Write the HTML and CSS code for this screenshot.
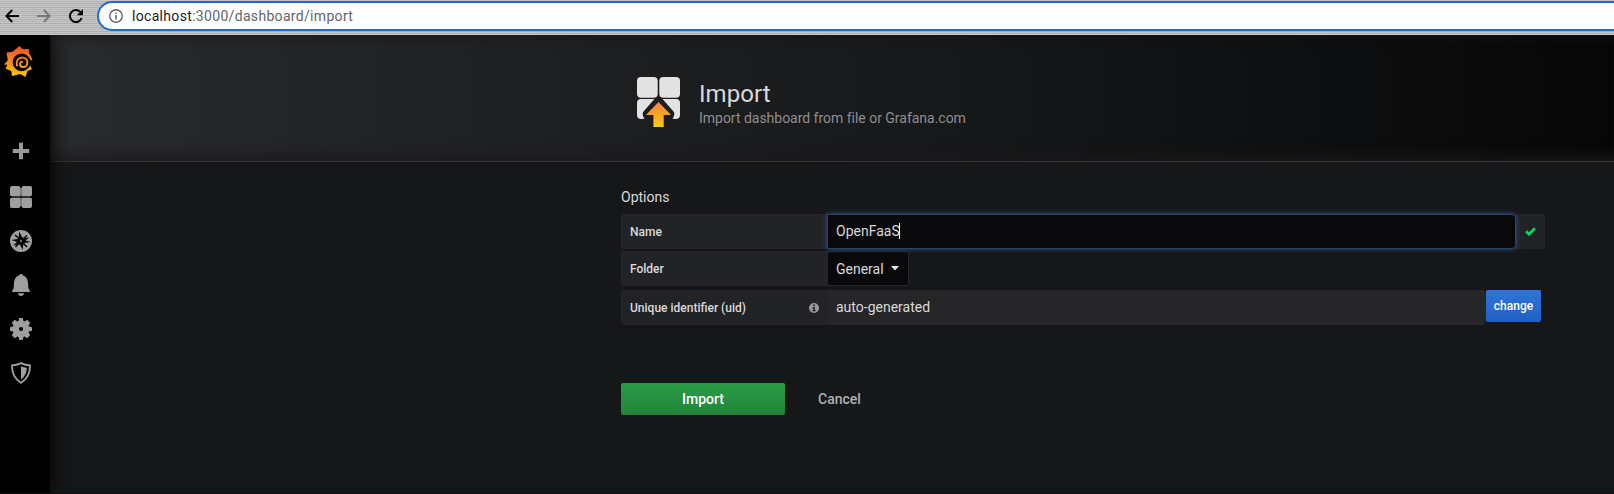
FILE: index.html
```html
<!DOCTYPE html>
<html lang="en">
<head>
<meta charset="utf-8">
<title>Import dashboard</title>
<link rel="stylesheet" href="styles.css">
</head>
<body>
<div class="toolbar">
  <div class="nav-buttons">
    <svg width="14" height="14" viewBox="0 0 14 14" fill="none" stroke="#080808" stroke-width="2"><path d="M14 7H1.5M7.2 1L1.4 7l5.8 6"/></svg>
    <svg width="14" height="14" viewBox="0 0 14 14" fill="none" stroke="#777" stroke-width="2"><path d="M0 7h12.5M6.8 1l5.8 6-5.8 6"/></svg>
    <svg width="14" height="14" viewBox="0 0 14 14"><path d="M12.6 9.2A6 6 0 1 1 11.3 2.9" fill="none" stroke="#080808" stroke-width="2"/><path d="M14 0v6.2H7.8z" fill="#080808"/></svg>
  </div>
  <div class="address">
    <svg width="14" height="14" viewBox="0 0 14 14"><circle cx="7" cy="7" r="6.2" fill="none" stroke="#5f6368" stroke-width="1.4"/><path d="M6.3 6.1h1.5v4.3H6.3zM6.3 3.4h1.5v1.5H6.3z" fill="#5f6368"/></svg>
    <div class="url"><span class="host">localhost</span>:3000/dashboard/import</div>
  </div>
</div>
<div class="app">
  <nav class="sidemenu">
    <svg class="logo" width="30" height="32" viewBox="0 0 30 32">
      <defs><linearGradient id="flame" gradientUnits="userSpaceOnUse" x1="0" y1="0" x2="0" y2="31"><stop offset="0.1" stop-color="#f05a28"/><stop offset=".5" stop-color="#f68a1f"/><stop offset="1" stop-color="#fbca0a"/></linearGradient></defs>
      <path fill="url(#flame)" d="M15.500 0l3.300 3.200 6-.2.200 4.500C27 9.500 28 12 28.300 15L27 14l-.9 5.500 1.900 3.800-4.600 1.600L21.500 31l-5.200-3-8.300 2-.8-4.900-5.500-2.400 1.600-3.900L0 18.500l3.800-4.200L2.500 6.500l6-.8z"/>
      <circle cx="17.600" cy="16.300" r="8.900" fill="#000"/>
      <path d="M23.500 10l3.800 4.700-.8 3.600-3 2.200z" fill="#000"/>
      <path d="M13 19.500C11.800 14.800 14.300 11.400 18 11.400c3.200 0 5.400 2.300 5.400 5.200 0 2.700-2 4.500-4.200 4.500-1.900 0-3.200-1.300-3.200-3 0-1.300.8-2.200 2-2.300" fill="none" stroke="url(#flame)" stroke-width="2" stroke-linecap="round"/>
    </svg>
    <svg class="item plus" width="22" height="22" viewBox="0 0 22 22"><path d="M11 4.800v12.400M4.800 11h12.400" fill="none" stroke="#999" stroke-width="4" stroke-linecap="square"/></svg>
    <svg class="item" width="22" height="22" viewBox="0 0 22 22" fill="#9f9f9f"><path fill="#666" d="M9 2h4v7h7v4h-7v7H9v-7H2V9h7z"/><rect width="10.400" height="10.400" rx="2"/><rect x="11.600" width="10.400" height="10.400" rx="2"/><rect y="11.600" width="10.400" height="10.400" rx="2"/><rect x="11.600" y="11.600" width="10.400" height="10.400" rx="2"/><path d="M0 11h22" stroke="#000" stroke-width="1.200"/></svg>
    <svg class="item" width="22" height="22" viewBox="0 0 22 22"><circle cx="11" cy="11" r="11" fill="#9f9f9f"/><path d="M9.200 1.800l3.200 5.700 1.400.8 5.400-.7-3.700 2.900 5.300 1.400-6.300 1.200-1.200 1.300-.6 5.400-2.600-4.900-1.600-.7-5.500 1.200 4-3.500L1.500 10l6-.9 1.100-1.200z" fill="#050505"/><path d="M5 5l4 3.500M17 5.500L13.500 8.500M5.500 17l3-3.500M17 17l-3.500-3.500" stroke="#050505" stroke-width="1.500"/><circle cx="11" cy="11" r="1.100" fill="#888"/></svg>
    <svg class="item" width="22" height="22" viewBox="0 0 22 22" fill="#9f9f9f"><path d="M11 0c1 0 1.500.5 1.700 1.300C16 2.300 17.800 5 18 9l.4 5.500L19.700 16v2H2.300v-2l1.300-1.500L4 9c.200-4 2-6.700 5.300-7.700C9.500.5 10 0 11 0zM8 19.200h6c-.2 1.700-1.500 2.800-3 2.800s-2.800-1.100-3-2.800z"/></svg>
    <svg class="item" width="22" height="22" viewBox="0 0 22 22"><path fill="#9f9f9f" fill-rule="evenodd" d="M9.200 0h3.600l.6 3 1.200.5 2.600-1.700 3 3-1.700 2.600.5 1.200 3 .6v3.600l-3 .6-.5 1.200 1.700 2.600-3 3-2.600-1.700-1.200.5-.6 3H9.200l-.6-3-1.200-.5-2.600 1.700-3-3 1.700-2.600-.5-1.200-3-.6V9.200l3-.6.5-1.200-1.700-2.600 3-3 2.600 1.700 1.200-.5zM11 8.900a2.100 2.100 0 1 0 0 4.200 2.100 2.100 0 0 0 0-4.200z"/></svg>
    <svg class="item" width="22" height="22" viewBox="0 0 22 22"><path d="M11 1.200c2.900 1.500 5.900 2.200 9 2.200.2 7.400-2.500 13.400-9 17.400C4.500 16.800 1.800 10.800 2 3.400c3.100 0 6.100-.7 9-2.200z" fill="none" stroke="#9f9f9f" stroke-width="1.900"/><path d="M11 4.200c1.900.8 3.700 1.300 5.800 1.500 0 4.800-1.900 8.900-5.800 11.900z" fill="#9f9f9f"/></svg>
  </nav>
  <main class="main">
    <header class="page-header">
      <svg class="header-icon" width="43" height="50" viewBox="0 0 43 50">
        <defs><linearGradient id="arrow" x1="0" y1="0" x2="0" y2="1"><stop offset="0" stop-color="#f58442"/><stop offset=".6" stop-color="#f9ad1c"/><stop offset="1" stop-color="#fccb0c"/></linearGradient></defs>
        <g fill="#e2e2e2"><rect width="20.700" height="20.800" rx="4"/><rect x="22.300" width="20.700" height="20.800" rx="4"/><path d="M4 22h13.500L6.500 34.500C5 36.500 5.500 39 7.500 41.700L4.500 42Q0 42 0 38V26Q0 22 4 22zM25.500 22H39q4 0 4 4v12q0 4-4.500 4l-3-.3c2-2.700 2.500-5.200 1-7.200z"/></g>
        <path d="M21.500 25L34 38h-7.300v12H16.400V38H9z" fill="url(#arrow)"/>
      </svg>
      <div><h1>Import</h1><div class="subtitle">Import dashboard from file or Grafana.com</div></div>
    </header>
    <section class="content">
      <h2>Options</h2>
      <div class="row">
        <div class="label">Name</div>
        <div class="input focused">OpenFaaS<span class="caret"></span></div>
        <div class="valid"><svg width="11" height="9" viewBox="0 0 11 9"><path d="M1 4.300l3 3 6-6" fill="none" stroke="#10d65a" stroke-width="2.700"/></svg></div>
      </div>
      <div class="row folder">
        <div class="label">Folder</div>
        <div class="dropdown">General<svg width="8" height="5" viewBox="0 0 8 5"><path d="M0 0h8L4 4.500z" fill="#e3e3e3"/></svg></div>
      </div>
      <div class="row">
        <div class="label">Unique identifier (uid)<svg width="10" height="10" viewBox="0 0 10 10"><circle cx="5" cy="5" r="5" fill="#999"/><path d="M4.200 1.500h1.700V3H4.200zM3.500 4h2.400v3.200h.8v1.100H3.400V7.200h.8V5h-.7z" fill="#212124"/></svg></div>
        <div class="input uid">auto-generated</div>
        <button class="change">change</button>
      </div>
      <div class="actions"><button class="import">Import</button><a class="cancel">Cancel</a></div>
    </section>
  </main>
</div>
</body>
</html>
```
FILE: styles.css
```css
* { box-sizing: border-box; }
body {
  margin: 0;
  height: 494px;
  overflow: hidden;
  display: flex;
  flex-direction: column;
  background: #161719;
  color: #d8d9da;
  font-family: Roboto, "Liberation Sans", sans-serif;
  font-size: 14px;
}
svg { display: block; flex: none; }
h1, h2 { margin: 0; font-weight: 400; }
button { border: 0; padding: 0; font: inherit; }
.toolbar {
  height: 35px;
  flex: none;
  display: flex;
  padding-top: 1px;
  background: repeating-linear-gradient(#c5c5c5 0 1px, #b3b3b3 1px 2px, #c9c9c9 2px 3px, #adadad 3px 4px);
}
.nav-buttons { width: 97px; padding: 8px 0 0 5px; display: flex; gap: 18px; }
.address {
  flex: 1;
  height: 30px;
  margin-right: -20px;
  padding-left: 10px;
  display: flex;
  align-items: center;
  gap: 9px;
  border: 2px solid #1a6bd0;
  border-radius: 15px;
  background: #fff;
}
.url { color: #636568; font-size: 14px; letter-spacing: .32px; }
.host { color: #202124; }
.app { flex: 1; display: flex; min-height: 0; overflow: hidden; border-bottom: 1px solid #110d10; }
.sidemenu {
  position: relative;
  z-index: 1;
  width: 50px;
  flex: none;
  display: flex;
  flex-direction: column;
  background: #000;
  box-shadow: 0 0 20px #000;
}
.logo { margin: 11px 0 62px 4px; }
.item { margin: 0 0 22px 10px; }
.plus { margin-bottom: 24px; }
.main { flex: 1; min-width: 0; }
.page-header {
  height: 127px;
  display: flex;
  padding: 42px 0 0 587px;
  border-bottom: 1px solid #343436;
  background: linear-gradient(90deg, #292a2d, #1c1d1f 40%, #17181a 58%, #0c0d0e 85%, #070707);
  box-shadow: inset 0 -14px 14px -10px #1a1a1c, inset 0 8px 12px -8px #161618;
}
.header-icon { margin-right: 19px; }
h1 { font-size: 24px; line-height: 28px; margin-top: 3px; letter-spacing: .05px; }
.subtitle { color: #8e8e8e; line-height: 20px; letter-spacing: -.02px; }
.content { padding: 27px 0 0 571px; }
h2 { font-size: 14px; line-height: 16px; margin-bottom: 9px; }
.row { display: flex; height: 35px; margin-bottom: 2px; }
.folder { margin-bottom: 4px; }
.label {
  width: 207px;
  display: flex;
  align-items: center;
  justify-content: space-between;
  padding: 0 8px;
  border: 1px solid #262628;
  border-radius: 3px 0 0 3px;
  background: #222327;
  font-size: 12px;
  font-weight: 500;
}
.input { display: flex; align-items: center; padding: 0 8px 1px; border: 1px solid #262628; border-radius: 0 4px 4px 0; }
.focused {
  width: 689px;
  background: #09090b;
  border-color: #294268;
  box-shadow: 0 0 5px #315796;
  z-index: 1;
}
.label + .focused { margin-left: -1px; }
.caret { width: 1px; height: 16px; margin-left: -1px; background: #fff; }
.valid { width: 29px; display: grid; place-items: center; background: #222327; }
.dropdown {
  width: 81px;
  display: flex;
  align-items: center;
  gap: 7px;
  padding-left: 8px;
  border: 1px solid #262628;
  border-left: 0;
  border-radius: 0 3px 3px 0;
  background: #09090b;
}
.uid { width: 658px; padding-left: 7px; background: #262628; }
.change {
  width: 55px;
  height: 32px;
  border-radius: 2px;
  background: linear-gradient(#2f74dc, #2060c2);
  color: #fff;
  font-size: 12px;
  font-weight: 500;
}
.actions { display: flex; align-items: center; margin-top: 58px; height: 32px; gap: 33px; font-weight: 500; }
.import { width: 164px; height: 32px; border-radius: 2px; background: linear-gradient(#299c46, #23843b); color: #fff; font-size: 14px; }
.cancel { color: #b0b0b0; }
```
